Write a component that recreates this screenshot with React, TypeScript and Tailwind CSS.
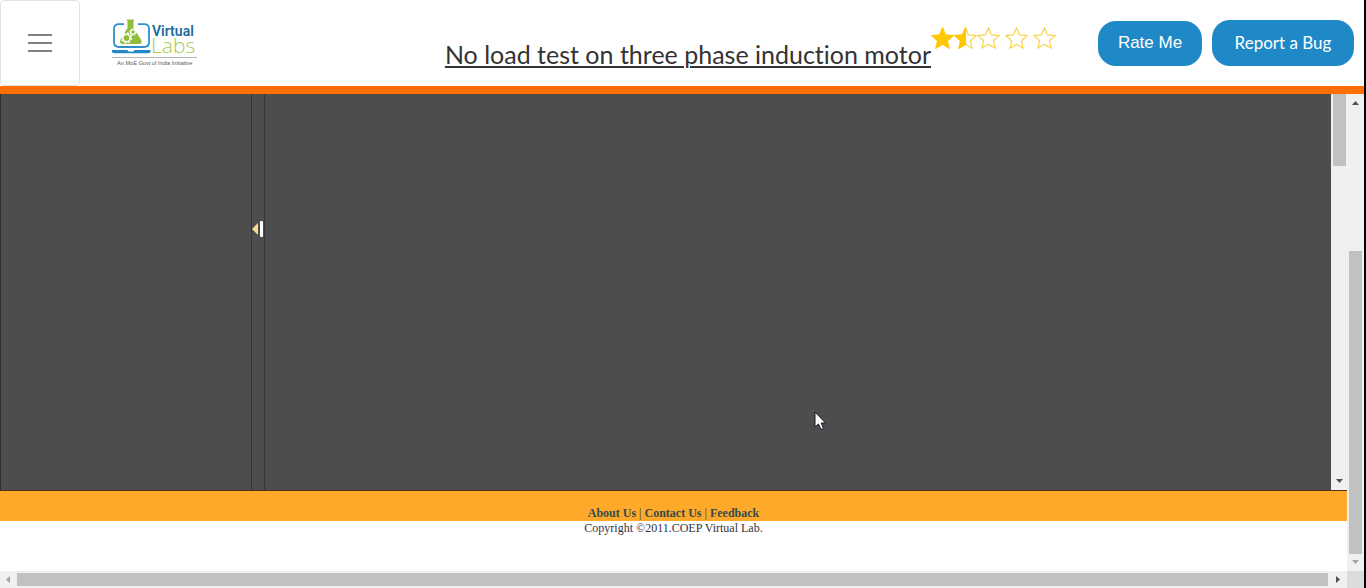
import React from "react";

const STAR = "M12 1.2 15.1 8.6 23 9.3 17 14.5 18.8 22.3 12 18.1 5.2 22.3 7 14.5 1 9.3 8.9 8.6Z";

function Star({ fill }: { fill: "full" | "half" | "none" }) {
  return (
    <svg viewBox="0.5 0.5 23 22.5" className="h-[22px] w-[23px]" aria-hidden="true">
      <path
        d={STAR}
        fill={fill === "full" ? "#ffc800" : "none"}
        stroke={fill === "full" ? "#ffc800" : "#f8d34a"}
        strokeWidth="1.2"
        strokeLinejoin="round"
      />
      {fill === "half" && (
        <path
          d="M12 1.2V18.1L5.2 22.3 7 14.5 1 9.3 8.9 8.6Z"
          fill="#ffc800"
          stroke="#ffc800"
          strokeWidth="1.2"
          strokeLinejoin="round"
        />
      )}
    </svg>
  );
}

function Logo() {
  return (
    <svg viewBox="0 0 88 50" className="h-[50px] w-[88px]" role="img" aria-label="Virtual Labs">
      <path
        d="M13 6.2H8Q3 6.2 3 11V24Q3 29 8 29H33Q38 29 38 24V11Q38 6.2 33 6.2H27"
        fill="none"
        stroke="#2e8fc9"
        strokeWidth="1.8"
      />
      <path d="M1 32H16.500Q17 33.500 18 33.500H22Q23 33.500 23.500 32H39.500V33.500Q39.500 35.200 37 35.200H4Q1 35.200 1 33.500Z" fill="#2389c6" />
      <path d="M16 1.500H23V3H22.500V10L30 21.500Q32 26 28 26H13Q7.500 26 9.500 21.500L16.500 10V3H16Z" fill="#91bd3a" />
      <circle cx="15.500" cy="20" r="3.700" fill="#91bd3a" stroke="#fff" strokeWidth="1.600" />
      <circle cx="15.500" cy="20" r="5" fill="none" stroke="#fff" strokeWidth="1.400" strokeDasharray="1.900 2.020" />
      <circle cx="22" cy="14" r="2.400" fill="#91bd3a" stroke="#fff" strokeWidth="1.300" />
      <circle cx="22" cy="14" r="3.300" fill="none" stroke="#fff" strokeWidth="1" strokeDasharray="1.200 1.390" />
      <text x="41" y="18" fontSize="14" fontWeight="600" fill="#1c6b9e" className="font-[Roboto,sans-serif]">
        Virtual
      </text>
      <text x="40" y="35" fontSize="21" fontWeight="300" fill="#a9c94f" className="font-['Open_Sans',sans-serif]">
        Labs
      </text>
      <path d="M1 39.500H86" stroke="#b5b5b5" strokeWidth="1" />
      <text x="6" y="46.500" fontSize="5.600" fill="#5a5a5a" className="font-['Liberation_Sans',sans-serif]">
        An MoE Govt of India Initiative
      </text>
    </svg>
  );
}

function Arrow({ dir, muted = false }: { dir: "up" | "down" | "left" | "right"; muted?: boolean }) {
  const d = {
    up: "M5 11H12L8.500 7Z",
    down: "M5 6H12L8.500 10Z",
    left: "M10 5V12L6 8.500Z",
    right: "M8 5V12L12 8.500Z",
  }[dir];
  return (
    <svg viewBox="0 0 17 17" className="size-[17px] shrink-0" aria-hidden="true">
      <path d={d} fill={muted ? "#a3a3a3" : "#505050"} />
    </svg>
  );
}

export default function App() {
  return (
    <div className="flex h-screen min-h-[400px] flex-col overflow-hidden border-r-2 border-black bg-white font-[Lato,sans-serif]">
      <header className="flex h-[94px] shrink-0 border-b-8 border-[#ff7000]">
        <button aria-label="Open menu" className="flex w-20 shrink-0 items-center justify-center rounded border border-[#e2e2e2]">
          <svg viewBox="0 0 24 20" className="h-5 w-6" aria-hidden="true">
            <path d="M0 2H24M0 10H24M0 18H24" stroke="#808080" strokeWidth="2" />
          </svg>
        </button>
        <a href="#home" className="ml-[31px] mt-[18px] shrink-0">
          <Logo />
        </a>
        <div className="flex flex-1 justify-end">
          <h1 className="mt-9 whitespace-nowrap text-[25px] leading-9 text-[#333] underline decoration-2 underline-offset-2 [font-variant-ligatures:none]">
            No load test on three phase induction motor
          </h1>
          <div role="img" aria-label="Rated 1.5 out of 5" className="mt-[27px] flex h-[22px] shrink-0">
            <Star fill="full" />
            <Star fill="half" />
            <div className="flex gap-[5px]">
              <Star fill="none" />
              <Star fill="none" />
              <Star fill="none" />
            </div>
          </div>
        </div>
        <div className="ml-[42px] mr-[10px] flex shrink-0 items-center gap-[10px] text-[17px] text-white">
          <button className="h-[45px] w-[104px] rounded-[18px] bg-[#1f88c7] font-['Liberation_Sans',Arial,sans-serif]">
            Rate Me
          </button>
          <button className="h-[46px] w-[142px] rounded-[18px] bg-[#1f88c7]">Report a Bug</button>
        </div>
      </header>

      <div className="flex min-h-0 flex-1">
        <div className="flex min-w-0 flex-1 flex-col">
          <main className="flex min-h-0 flex-1 border-b border-[#503214]">
            <div className="relative flex min-w-0 flex-1 border-l border-[#303030] bg-[#4d4d4d]">
              <aside className="w-[250px] shrink-0" />
              <button aria-label="Collapse sidebar" className="flex w-[14px] shrink-0 justify-center border-x border-[#363636] pt-[127px]">
                <svg viewBox="0 0 12 16" className="h-4 w-3 shrink-0" aria-hidden="true">
                  <path d="M0 8 6 2V14Z" fill="#fbdc92" />
                  <rect x="8" width="3" height="16" rx="1" fill="#fff" />
                </svg>
              </button>
              <svg viewBox="0 0 14 20" className="absolute left-[813px] top-[317px] h-5 w-[14px]" aria-hidden="true">
                <path d="M1 1V16L4.500 13 7 18.500 9.500 17.400 7.200 12H11.500Z" fill="#fff" stroke="#15152e" strokeWidth="1" />
              </svg>
            </div>
            <div className="flex w-4 shrink-0 flex-col items-center justify-between bg-[#f0f0f0]">
              <div className="h-[72px] w-[13px] bg-[#c1c1c1]" />
              <Arrow dir="down" />
            </div>
          </main>
          <footer className="h-20 shrink-0 text-center font-['Liberation_Serif',serif] text-[12px] leading-[15px] text-[#334]">
            <nav className="h-[30px] bg-[#ffa92b] pt-[15px]">
              <a href="#about" className="font-bold text-[#344b4b]">About Us</a>
              {" | "}
              <a href="#contact" className="font-bold text-[#344b4b]">Contact Us</a>
              {" | "}
              <a href="#feedback" className="font-bold text-[#344b4b]">Feedback</a>
            </nav>
            <p>Copyright ©2011.COEP Virtual Lab.</p>
          </footer>
        </div>
        <div className="flex w-[17px] shrink-0 flex-col items-center bg-[#f0f0f0]">
          <Arrow dir="up" />
          <div className="mt-[140px] w-[13px] flex-1 bg-[#c1c1c1]" />
          <Arrow dir="down" muted />
        </div>
      </div>

      <div className="flex h-[17px] shrink-0 items-center bg-[#f0f0f0]">
        <Arrow dir="left" muted />
        <div className="h-[13px] flex-1 bg-[#c1c1c1]" />
        <Arrow dir="right" />
        <div className="ml-[2px] size-[17px] shrink-0 bg-[#dcdcdc]" />
      </div>
    </div>
  );
}
